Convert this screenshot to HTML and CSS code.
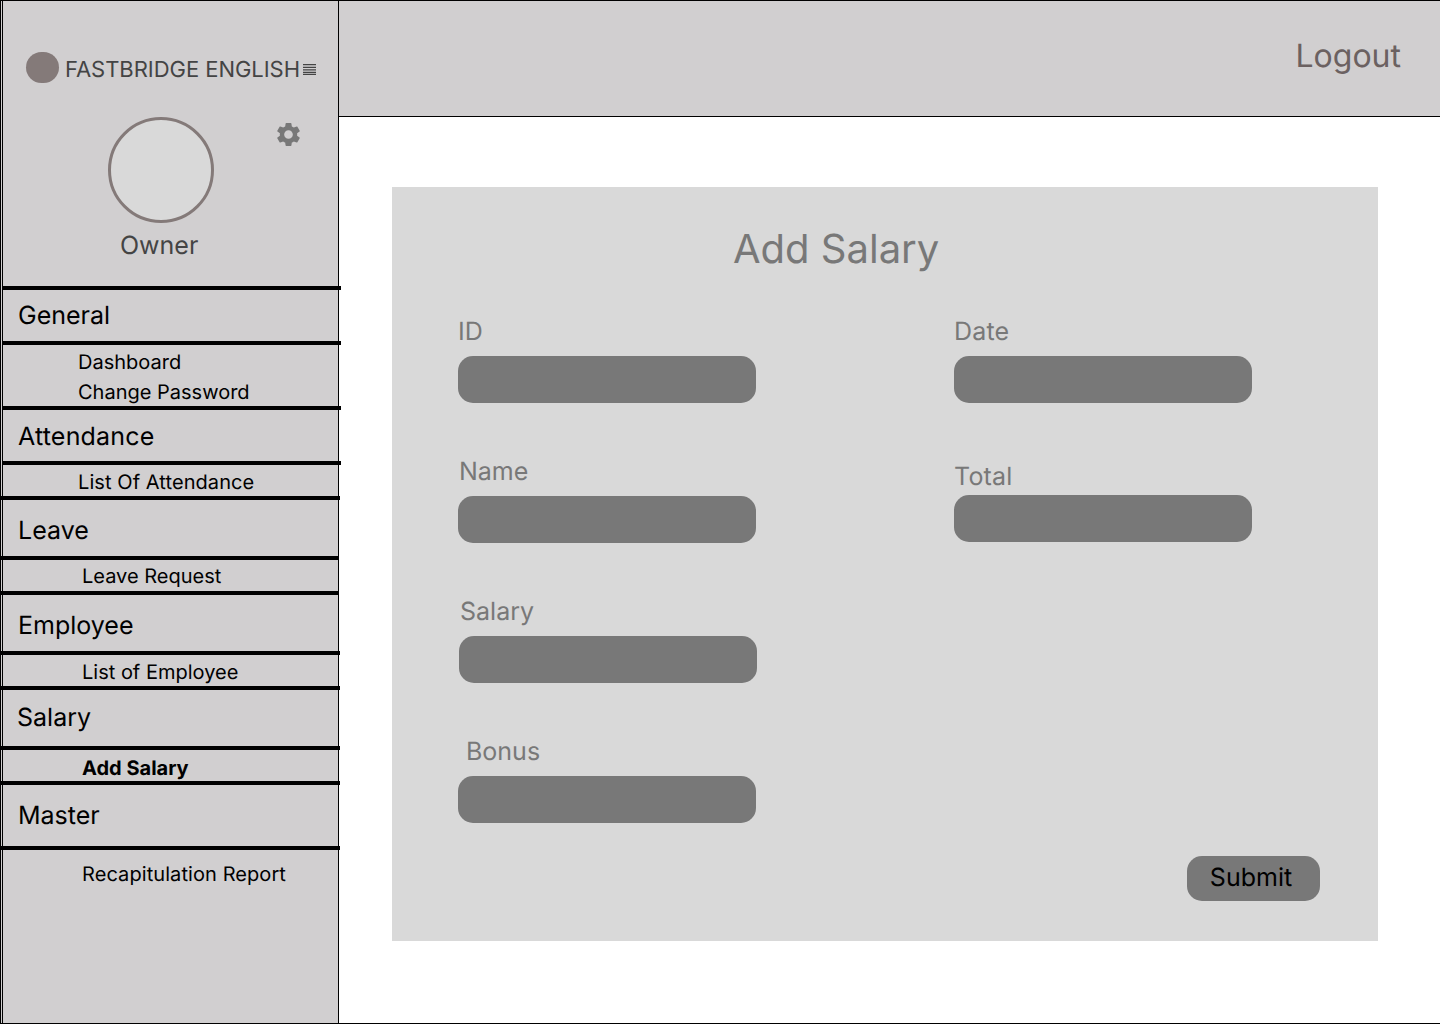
FILE: index.html
```html
<!DOCTYPE html>
<html lang="en">
<head>
<meta charset="utf-8">
<title>Add Salary</title>
<link rel="stylesheet" href="styles.css">
</head>
<body>
<div class="app">
  <aside class="sidebar">
    <div class="profile">
      <div class="brand">
        <span class="brand-mark"></span>
        <span class="brand-name">FASTBRIDGE ENGLISH</span>
        <svg class="menu-icon" width="13" height="12" viewBox="0 0 13 12"><path d="M0 .65h13M0 3.25h13M0 5.75h13M0 8.25h13M0 10.45h13" stroke="#444" stroke-width="1.25"/></svg>
      </div>
      <div class="account">
        <div class="avatar"></div>
        <svg class="gear" width="29" height="29" viewBox="0 0 24 24"><path fill="#787878" d="M19.14 12.94c.04-.3.06-.61.06-.94 0-.32-.02-.64-.07-.94l2.03-1.58c.18-.14.23-.41.12-.61l-1.92-3.32c-.12-.22-.37-.29-.59-.22l-2.39.96c-.5-.38-1.03-.7-1.62-.94l-.36-2.54c-.04-.24-.24-.41-.48-.41h-3.84c-.24 0-.43.17-.47.41l-.36 2.54c-.59.24-1.13.57-1.62.94l-2.39-.96c-.22-.08-.47 0-.59.22L2.74 8.87c-.12.21-.08.47.12.61l2.03 1.58c-.05.3-.09.63-.09.94s.02.64.07.94l-2.03 1.58c-.18.14-.23.41-.12.61l1.92 3.32c.12.22.37.29.59.22l2.39-.96c.5.38 1.03.7 1.62.94l.36 2.54c.05.24.24.41.48.41h3.84c.24 0 .44-.17.47-.41l.36-2.54c.59-.24 1.13-.56 1.62-.94l2.39.96c.22.08.47 0 .59-.22l1.92-3.32c.12-.22.07-.47-.12-.61l-2.01-1.58zM12 15.6c-1.98 0-3.6-1.62-3.6-3.6s1.62-3.6 3.6-3.6 3.6 1.62 3.6 3.6-1.62 3.6-3.6 3.6z"/></svg>
      </div>
      <div class="role">Owner</div>
    </div>
    <nav class="nav">
      <div class="group general">General</div>
      <div class="items general-items"><a>Dashboard</a><a>Change Password</a></div>
      <div class="group attendance">Attendance</div>
      <div class="items attendance-items"><a>List Of Attendance</a></div>
      <div class="group leave">Leave</div>
      <div class="items indented leave-items"><a>Leave Request</a></div>
      <div class="group employee">Employee</div>
      <div class="items indented"><a>List of Employee</a></div>
      <div class="group salary">Salary</div>
      <div class="items indented salary-items"><a class="active">Add Salary</a></div>
      <div class="group master">Master</div>
      <div class="items indented master-items"><a>Recapitulation Report</a></div>
    </nav>
  </aside>
  <div class="page">
    <header class="topbar"><a class="logout">Logout</a></header>
    <main class="content">
      <form class="panel">
        <h1 class="title">Add Salary</h1>
        <div class="columns">
          <div class="column">
            <div class="field"><label>ID</label><div class="input"></div></div>
            <div class="field name"><label>Name</label><div class="input"></div></div>
            <div class="field shifted"><label>Salary</label><div class="input"></div></div>
            <div class="field bonus"><label>Bonus</label><div class="input"></div></div>
          </div>
          <div class="column">
            <div class="field date"><label>Date</label><div class="input"></div></div>
            <div class="field total"><label>Total</label><div class="input"></div></div>
          </div>
        </div>
        <button class="submit" type="button">Submit</button>
      </form>
    </main>
  </div>
</div>
</body>
</html>
```

FILE: styles.css
```css
* { box-sizing: border-box; }
body {
  margin: 0;
  font-family: Inter, sans-serif;
  font-weight: 380;
  text-rendering: geometricPrecision;
  color: #000;
  background: #fff;
}
.app {
  display: flex;
  width: 1440px;
  height: 1024px;
  border: 1px solid #000;
  border-right: 0;
  overflow: hidden;
}

/* Sidebar */
.sidebar {
  flex: none;
  width: 338px;
  padding-left: 1px;
  background: #d1cfd0;
  border-right: 1px solid #000;
}
.profile {
  height: 285px;
  padding: 51px 0 0 23px;
  border-left: 1px solid #000;
}
.brand {
  display: flex;
  align-items: flex-start;
  height: 31px;
}
.brand-mark {
  width: 33px;
  height: 31px;
  border-radius: 15.5px;
  background: #847a79;
}
.brand-name {
  width: 238px;
  margin: 4px 0 0 6px;
  font-size: 22px;
  line-height: 29px;
  letter-spacing: -.04px;
  color: #444;
  white-space: nowrap;
}
.menu-icon { margin-top: 12px; }
.account {
  display: flex;
  margin: 34px 0 0 82px;
}
.avatar {
  width: 106px;
  height: 106px;
  border: 3px solid #847a79;
  border-radius: 50%;
  background: #d9d9d9;
}
.gear { margin: 3px 0 0 60px; }
.role {
  margin: 7px 0 0 94px;
  font-size: 25px;
  line-height: 32px;
  color: #444;
}
.nav {
  height: 737px;
  border-left: 1px solid #000;
}
.group, .items {
  position: relative;
  width: 338px;
  border-top: 4px solid #000;
}
.group {
  height: 60px;
  padding: 15px 0 0 15px;
  font-size: 25px;
  line-height: 32px;
}
.items {
  display: flex;
  flex-direction: column;
  gap: 6px;
  height: 35px;
  padding: 5px 0 0 75px;
  font-size: 20px;
  line-height: 24px;
}
.indented { padding-left: 79px; }
.general { height: 55px; padding-top: 10px; }
.general-items { height: 65px; }
.attendance { height: 55px; padding-top: 11px; letter-spacing: .2px; }
.attendance-items, .master-items { letter-spacing: .08px; }
.leave, .leave-items, .employee, .employee ~ .group, .employee ~ .items {
  width: 340px;
  margin-left: -3px;
}
.leave, .employee, .master { padding-left: 18px; }
.leave-items, .employee ~ .items { padding-left: 82px; }
.leave-items, .employee { width: 339px; }
.employee { width: 339px; }
.leave-items { padding-top: 4px; }
.salary { padding: 12px 0 0 17px; }
.salary-items { padding-top: 6px; }
.master { height: 65px; }
.master-items { padding-top: 12px; }
/* The outer rules remain visible beside the full-width rows. */
.leave, .leave-items, .employee, .employee ~ .group, .employee ~ .items {
  background: linear-gradient(90deg, #000 1px, transparent 1px 2px, #000 2px 3px, transparent 3px);
}
.active { font-weight: 700; letter-spacing: 0; }

/* Main area */
.page { flex: 1; }
.topbar {
  display: flex;
  justify-content: flex-end;
  height: 116px;
  padding: 35px 39px 0 0;
  background: #d1cfd0;
  border-bottom: 1px solid #000;
}
.logout {
  font-size: 32px;
  line-height: 39px;
  color: #6b6161;
}
.content { padding: 70px 0 0 53px; }
.panel {
  display: flex;
  flex-direction: column;
  width: 986px;
  height: 754px;
  padding: 38px 58px 40px 66px;
  background: #d9d9d9;
  color: #787878;
}
.title {
  margin: 0 0 0 275px;
  font-size: 40px;
  line-height: 48px;
  font-weight: 380;
}
.columns {
  display: flex;
  gap: 198px;
  margin-top: 43px;
}
.column { width: 298px; }
.field {
  height: 140px;
  font-size: 25px;
  line-height: 32px;
}
.field label { display: block; }
.input {
  width: 298px;
  height: 47px;
  margin-top: 8px;
  border-radius: 15px;
  background: #787878;
}
.name label { padding-left: 1px; }
.shifted { padding-left: 1px; }
.shifted label { padding-left: 1px; }
.bonus { height: 87px; }
.bonus label { padding-left: 8px; }
.date, .total { letter-spacing: .2px; }
.total { padding-top: 5px; }
.total .input { margin-top: 2px; }
.submit {
  align-self: flex-end;
  width: 133px;
  height: 45px;
  margin-top: auto;
  padding: 0 5px 1px 0;
  border: 0;
  border-radius: 15px;
  background: #787878;
  color: #000;
  font: 380 25px/30px Inter, sans-serif;
  text-rendering: inherit;
}
```
